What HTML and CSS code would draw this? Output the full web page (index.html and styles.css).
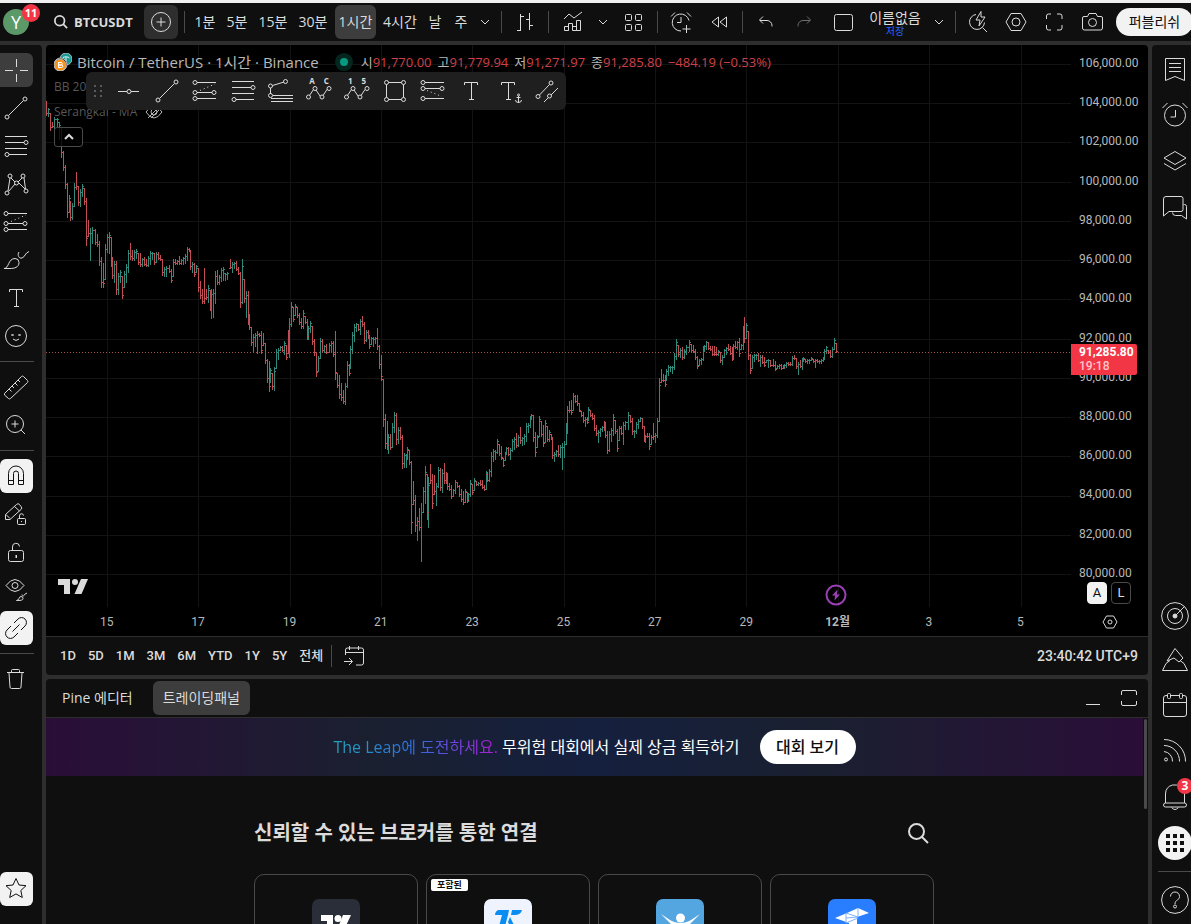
FILE: index.html
```html
<!DOCTYPE html>
<html lang="ko">
<head>
<meta charset="utf-8">
<title>BTCUSDT</title>
<link rel="stylesheet" href="styles.css">
</head>
<body>
<svg class="defs" aria-hidden="true">
  <symbol id="chev" viewBox="0 0 10 10"><path d="M1 3l4 4 4-4"/></symbol>
  <symbol id="line" viewBox="0 0 28 28"><path d="M6.7 21.3L21.3 6.7"/><circle cx="5" cy="23" r="2"/><circle cx="23" cy="5" r="2"/></symbol>
  <symbol id="fib" viewBox="0 0 28 28"><path d="M3 4.500h22M3 10.500h19M3 16.500h22M7 22.500h18"/><circle cx="24" cy="10.500" r="2"/><circle cx="5" cy="22.500" r="2"/></symbol>
  <symbol id="forecast" viewBox="0 0 28 28"><path d="M6 5.500h19M6 15.500h15M6 21.500h19"/><path d="M9 13.500L24 7" stroke-dasharray="1 3"/><circle cx="4" cy="5.500" r="2"/><circle cx="4" cy="15.500" r="2"/><circle cx="23" cy="15.500" r="2"/><circle cx="4" cy="21.500" r="2"/></symbol>
  <symbol id="short" viewBox="0 0 28 28"><path d="M6 5.500h19M6 11.500h15M6 21.500h19"/><path d="M8 13.500L23 19.500" stroke-dasharray="1 3"/><circle cx="4" cy="5.500" r="2"/><circle cx="4" cy="11.500" r="2"/><circle cx="23" cy="11.500" r="2"/><circle cx="4" cy="21.500" r="2"/></symbol>
  <symbol id="text" viewBox="0 0 28 28"><path d="M7.500 8V5.500h13V8M14.500 5.500v17M12 22.500h5"/></symbol>
  <symbol id="full" viewBox="0 0 28 28"><path d="M6.500 11V8a2 2 0 0 1 2-2H11M17 6h3a2 2 0 0 1 2 2v3M22 17v3a2 2 0 0 1-2 2h-3M11 22H8.500a2 2 0 0 1-2-2v-3"/></symbol>
  <symbol id="hex" viewBox="0 0 28 28"><path d="M9 5.500h10L24 14l-5 8.500H9L4 14z"/><circle cx="14" cy="14" r="4"/></symbol>
  <symbol id="tv" viewBox="0 0 30 15"><path d="M0 0h12v15H6V6H0z"/><circle cx="17" cy="3" r="3"/><path d="M23 0h7l-6.500 15h-7z"/></symbol>
</svg>

<header class="topbar">
  <div class="group account">
    <button class="avatar" aria-label="계정">Y<span class="badge">11</span></button>
    <button class="symbol"><svg class="i-search" viewBox="0 0 16 16"><circle cx="6.500" cy="6.500" r="5.500"/><path d="M10.500 10.500L15 15"/></svg>BTCUSDT</button>
    <button class="ib on" aria-label="비교"><svg class="ic" viewBox="0 0 28 28"><circle cx="14" cy="14" r="9.500"/><path d="M14 9.500v9M9.500 14h9"/></svg></button>
  </div>
  <i class="sep"></i>
  <div class="group intervals">
    <button class="iv">1분</button><button class="iv">5분</button><button class="iv wide">15분</button><button class="iv wide">30분</button><button class="iv on">1시간</button><button class="iv hours">4시간</button><button class="iv one">날</button><button class="iv one">주</button>
    <button class="cb" aria-label="더보기"><svg class="chev"><use href="#chev"/></svg></button>
  </div>
  <i class="sep"></i>
  <div class="group style">
    <button class="ib" aria-label="바"><svg class="ic" viewBox="0 0 28 28"><path d="M9.500 6v17M6 22.500h3.500M9.500 8.500H13M18.500 5v17M15 11.500h3.500M18.500 17.500H22"/></svg></button>
  </div>
  <i class="sep"></i>
  <div class="group studies">
    <button class="ib" aria-label="지표"><svg class="ic" viewBox="0 0 28 28"><path d="M5.500 22.500v-4h4v4zM9.500 22.500v-7h4v7M13.500 18.500h4v4M17.500 22.500v-10h4v10zM13.500 22.500h4M5 11l5-5 5 4 8-6"/></svg></button>
    <button class="cb" aria-label="즐겨찾기 지표"><svg class="chev"><use href="#chev"/></svg></button>
    <button class="ib" aria-label="레이아웃 템플릿"><svg class="ic" viewBox="0 0 28 28"><rect x="6.500" y="6.500" width="6" height="6" rx="1"/><rect x="16.500" y="6.500" width="6" height="6" rx="1"/><rect x="6.500" y="16.500" width="6" height="6" rx="1"/><rect x="16.500" y="16.500" width="6" height="6" rx="1"/></svg></button>
  </div>
  <i class="sep"></i>
  <div class="group replay">
    <button class="ib" aria-label="얼러트"><svg class="ic" viewBox="0 0 28 28"><path d="M22 12.500a8.500 8.500 0 1 0-8 10.500M14 9v5.500h-4M4 8.500l4-4M20 4.500l4 4M19.500 17v8M15.500 21h8"/></svg></button>
    <button class="ib" aria-label="리플레이"><svg class="ic" viewBox="0 0 28 28"><path d="M13.500 9v10L7 14zM21.500 9v10L15 14z"/></svg></button>
  </div>
  <i class="sep"></i>
  <div class="group layout">
    <button class="ib" aria-label="되돌리기"><svg class="ic" viewBox="0 0 28 28"><path d="M12 8.500L8.500 12l3.500 3.500M9 12.500h7a5 5 0 0 1 5 5v1"/></svg></button>
    <button class="ib dim" aria-label="다시하기"><svg class="ic" viewBox="0 0 28 28"><path d="M17 8.500l3.500 3.500-3.500 3.500M20 12.500h-7a5 5 0 0 0-5 5v1"/></svg></button>
    <button class="ib" aria-label="레이아웃"><svg class="ic" viewBox="0 0 28 28"><rect x="5.500" y="6.500" width="18" height="16" rx="2"/></svg></button>
    <button class="save"><span>이름없음</span><small>저장</small></button>
    <button class="cb slim" aria-label="레이아웃 관리"><svg class="chev"><use href="#chev"/></svg></button>
  </div>
  <i class="sep"></i>
  <div class="group actions">
    <button class="ib" aria-label="빠른 검색"><svg class="ic" viewBox="0 0 28 28"><path d="M12 6.500a7.500 7.500 0 1 0 8.500 8M18.500 19.500L23 24M17 3.500L12 12h4l-1 6 6-9h-4z"/></svg></button>
    <button class="ib" aria-label="설정"><svg class="ic"><use href="#hex"/></svg></button>
    <button class="ib" aria-label="전체 화면"><svg class="ic"><use href="#full"/></svg></button>
    <button class="ib" aria-label="스냅샷"><svg class="ic" viewBox="0 0 28 28"><path d="M6 8.500h3.500l1.500-3h7l1.500 3H23a1.500 1.500 0 0 1 1.500 1.500v10a2 2 0 0 1-2 2h-16a2 2 0 0 1-2-2V10A1.500 1.500 0 0 1 6 8.500z"/><circle cx="14.500" cy="14.500" r="4"/></svg></button>
    <button class="publish">퍼블리쉬</button>
  </div>
</header>

<div class="workspace">
  <nav class="tools">
    <button class="tool on" aria-label="십자선"><svg class="ic" viewBox="0 0 28 28"><path d="M14.500 3v8M14.500 18v8M3 14.500h8M18 14.500h8"/></svg></button>
    <button class="tool" aria-label="추세줄"><svg class="ic"><use href="#line"/></svg></button>
    <button class="tool" aria-label="피보나치"><svg class="ic"><use href="#fib"/></svg></button>
    <button class="tool" aria-label="패턴"><svg class="ic" viewBox="0 0 28 28"><path d="M8 8l-2 13M9 8l4 4M17 13l6 6M22 8l1.500 11M20 8l-4 4M7 21l6-7"/><circle cx="8" cy="6" r="2"/><circle cx="21" cy="6" r="2"/><circle cx="14.500" cy="13" r="2"/><circle cx="5" cy="23" r="2"/><circle cx="24" cy="21" r="2"/></svg></button>
    <button class="tool" aria-label="예측"><svg class="ic"><use href="#forecast"/></svg></button>
    <button class="tool" aria-label="브러시"><svg class="ic" viewBox="0 0 28 28"><path d="M2 22.500c5 0 4-10 11-10a4 4 0 0 1 4 4c0 5-5 6-9 6zM17 6c-2 3 0 7 3 6 3-1 3-5 7-6.500"/></svg></button>
    <button class="tool" aria-label="텍스트"><svg class="ic"><use href="#text"/></svg></button>
    <button class="tool" aria-label="아이콘"><svg class="ic" viewBox="0 0 28 28"><circle cx="14" cy="14" r="10.500"/><path d="M10 12v2M11 12v2M17 12v2M18 12v2M11 17q3 3 6 0"/></svg></button>
    <hr>
    <button class="tool" aria-label="측정"><svg class="ic" viewBox="0 0 28 28"><path d="M2.500 20.500l17-17a1.500 1.500 0 0 1 2 0l4 4a1.500 1.500 0 0 1 0 2l-17 16a1.500 1.500 0 0 1-2 0l-4-3.500zM7 16l2.500 2.500M10 13l2 2M13 10l2.500 2.500M16 7l2 2"/></svg></button>
    <button class="tool" aria-label="확대"><svg class="ic" viewBox="0 0 28 28"><circle cx="13" cy="13" r="8.500"/><path d="M19 19l4 4M13 9.500v7M9.500 13h7"/></svg></button>
    <hr>
    <button class="tool lit" aria-label="자석"><svg class="ic" viewBox="0 0 28 28"><path d="M6.500 22.500v-11a7.500 7.500 0 0 1 15 0v11h-5v-11a2.500 2.500 0 0 0-5 0v11zM6.500 18.500h5M16.500 18.500h5"/></svg></button>
    <button class="tool" aria-label="그리기 유지"><svg class="ic" viewBox="0 0 28 28"><path d="M3.500 19.500v-5l11-10a2 2 0 0 1 3 0l1.500 2a2 2 0 0 1 0 3L8 19.500zM12.500 6.500l5 4.500M4 14.500l4 4"/><rect x="15.500" y="18.500" width="8" height="6" rx="1"/><path d="M17.500 18v-2a2 2 0 0 1 4-.5M19.500 21v1"/></svg></button>
    <button class="tool" aria-label="잠금"><svg class="ic" viewBox="0 0 28 28"><rect x="6.500" y="12.500" width="15" height="11" rx="2"/><path d="M10.500 12V9a3.500 3.500 0 0 1 7-.5M14 17v3M14.500 17v3"/></svg></button>
    <button class="tool" aria-label="숨기기"><svg class="ic" viewBox="0 0 28 28"><path d="M4 9.500Q8.500 3.500 13 3.500T22 9.500Q17.500 15.500 13 15.500T4 9.500z"/><circle cx="13" cy="9.500" r="3"/><path d="M14.500 24.500c3 0 2-4 4.500-4a2 2 0 0 1 2 2c0 2-3 2-6.500 2zM20 18.500c0 2 2 2 2.500 0l2.500-1.500"/></svg></button>
    <button class="tool lit" aria-label="동기화"><svg class="ic" viewBox="0 0 28 28"><path d="M12 9l4-4a4.900 4.900 0 0 1 7 7l-4 4M16 19l-4 4a4.900 4.900 0 0 1-7-7l4-4M10.500 17.500l7-7"/></svg></button>
    <hr>
    <button class="tool" aria-label="삭제"><svg class="ic" viewBox="0 0 28 28"><path d="M5 7.500h17M9.500 7V5.500a1 1 0 0 1 1-1h6a1 1 0 0 1 1 1V7M7 8l1 14a1.500 1.500 0 0 0 1.500 1.500h8A1.500 1.500 0 0 0 19 22l1-14"/></svg></button>
    <button class="tool lit last" aria-label="즐겨찾기"><svg class="ic" viewBox="0 0 28 28"><path d="M14 3.500l3 6.500 7 .7-5.200 4.800 1.500 7-6.300-3.600L7.700 22.500l1.500-7L4 10.700l7-.7z"/></svg></button>
  </nav>

  <main class="center">
    <section class="chart">
      <div class="plot">
        <svg id="plot" viewBox="0 0 1025 562" preserveAspectRatio="none"></svg>
        <div class="legend">
          <div class="title">
            <svg class="coins" viewBox="0 0 18 18"><circle cx="12" cy="6" r="6" fill="#1a9a94"/><path d="M9 4.500c2-1 5-1 6.500.5M12 4v4" stroke="#e8f5f4"/><circle cx="6.500" cy="11.500" r="6.500" fill="#000"/><circle cx="6" cy="12" r="6" fill="#f7931a"/><path d="M4.500 9v6M4.500 9.500h2.500a1 1 0 0 1 0 2.500H5h2.500a1 1 0 0 1 0 2.500h-3" stroke="#fff"/></svg>
            <h1>Bitcoin / TetherUS · 1시간 · Binance</h1><i class="live"></i>
            <p class="ohlc"><span>시<b>91,770.00</b></span><span>고<b>91,779.94</b></span><span>저<b>91,271.97</b></span><span>종<b>91,285.80</b></span><b>−484.19 (−0.53%)</b></p>
          </div>
          <div class="study">BB 20</div>
          <div class="study">Serangkai - MA <svg class="eye" viewBox="0 0 18 14"><path d="M1 7q4-6 8-6t8 6q-4 6-8 6T1 7zM3 13L15 1M6 13L16 3"/><circle cx="9" cy="7" r="3"/></svg></div>
          <button class="fold" aria-label="접기"><svg class="chev up"><use href="#chev"/></svg></button>
        </div>
        <div class="favs">
          <svg class="grip" viewBox="0 0 10 14"><path d="M1 2h2M7 2h2M1 7h2M7 7h2M1 12h2M7 12h2" stroke-width="2"/></svg>
          <button aria-label="가로줄"><svg class="ic" viewBox="0 0 28 28"><path d="M3 14.500h9M16 14.500h8"/><circle cx="14" cy="14.500" r="2"/></svg></button>
          <button aria-label="추세줄"><svg class="ic"><use href="#line"/></svg></button>
          <button aria-label="롱 포지션"><svg class="ic"><use href="#forecast"/></svg></button>
          <button aria-label="피보나치 되돌림"><svg class="ic"><use href="#fib"/></svg></button>
          <button aria-label="피보나치 확장"><svg class="ic" viewBox="0 0 28 28"><path d="M3.500 11v6M5.500 8.500L17 5M6 18.500h20M4 21.500h22M4 24.500h22"/><circle cx="3.500" cy="9" r="2"/><circle cx="18.500" cy="4.500" r="2"/><circle cx="3.500" cy="18.500" r="2"/></svg></button>
          <button aria-label="엘리엇 조정 파동"><span class="wave"><span>A</span><span>C</span></span><svg class="ic" viewBox="0 0 28 28"><path d="M4.500 18.500l4-6M11 13l4 6M18 18.500l4-6"/><circle cx="3.500" cy="20" r="2"/><circle cx="10" cy="11.500" r="2"/><circle cx="17" cy="20" r="2"/><circle cx="24" cy="11.500" r="2"/></svg></button>
          <button aria-label="엘리엇 충격 파동"><span class="wave"><span>1</span><span>5</span></span><svg class="ic" viewBox="0 0 28 28"><path d="M4.500 18.500l4-6M11 13l4 6M18 18.500l4-6"/><circle cx="3.500" cy="20" r="2"/><circle cx="10" cy="11.500" r="2"/><circle cx="17" cy="20" r="2"/><circle cx="24" cy="11.500" r="2"/></svg></button>
          <button aria-label="사각형"><svg class="ic" viewBox="0 0 28 28"><path d="M7.500 5.500h13M22.500 7.500v13M7.500 22.500h13M5.500 7.500v13"/><circle cx="5.500" cy="5.500" r="2"/><circle cx="22.500" cy="5.500" r="2"/><circle cx="5.500" cy="22.500" r="2"/><circle cx="22.500" cy="22.500" r="2"/></svg></button>
          <button aria-label="숏 포지션"><svg class="ic"><use href="#short"/></svg></button>
          <button aria-label="텍스트"><svg class="ic"><use href="#text"/></svg></button>
          <button aria-label="고정 텍스트"><svg class="ic" viewBox="0 0 28 28"><path d="M6.500 8V5.500h13V8M13.500 5.500v17M11 22.500h5M23.500 19v7M21.500 20.500h4M20.500 23q0 2.500 3 2.500t3-2.500"/><circle cx="23.500" cy="18" r="1"/></svg></button>
          <button aria-label="평행 채널"><svg class="ic" viewBox="0 0 28 28"><path d="M6.500 18L16.500 7.500M11 25l4-4M18 18l7-7"/><circle cx="5" cy="19.500" r="2"/><circle cx="18" cy="6" r="2"/><circle cx="16.500" cy="19" r="2"/></svg></button>
        </div>
        <svg class="tvmark"><use href="#tv"/></svg>
        <button class="bolt" aria-label="이벤트"><svg viewBox="0 0 22 22"><circle cx="11" cy="11" r="9.500"/><path d="M12.500 5.500L7 11.500h3L9.500 16.500 15 10.500h-3z" fill="#9c3fb5"/></svg></button>
      </div>
      <div class="axis">
        <ul class="prices"><li>106,000.00</li><li>104,000.00</li><li>102,000.00</li><li>100,000.00</li><li>98,000.00</li><li>96,000.00</li><li>94,000.00</li><li>92,000.00</li><li>90,000.00</li><li>88,000.00</li><li>86,000.00</li><li>84,000.00</li><li>82,000.00</li><li>80,000.00</li></ul>
        <div class="last-price"><b>91,285.80</b><span>19:18</span></div>
        <div class="modes"><button class="on">A</button><button>L</button></div>
      </div>
      <ol class="times"><li>15</li><li>17</li><li>19</li><li>21</li><li>23</li><li>25</li><li>27</li><li>29</li><li><b>12월</b></li><li>3</li><li>5</li></ol>
      <button class="axis-set" aria-label="축 설정"><svg viewBox="0 0 16 16"><path d="M4.500 2h7L15 8l-3.500 6h-7L1 8z"/><circle cx="8" cy="8" r="2"/></svg></button>
    </section>

    <div class="ranges">
      <button>1D</button><button>5D</button><button>1M</button><button>3M</button><button>6M</button><button>YTD</button><button>1Y</button><button>5Y</button><button>전체</button>
      <i class="sep"></i>
      <button aria-label="날짜로 이동"><svg class="ic" viewBox="0 0 28 28"><path d="M5.500 13V8a2 2 0 0 1 2-2h14a2 2 0 0 1 2 2v13a2 2 0 0 1-2 2H16M5.500 10.500h18M9.500 4v4M18.500 4v4M4 19.500h8M9 16l3.500 3.500L9 23"/></svg></button>
      <button class="clock">23:40:42 UTC+9</button>
    </div>

    <section class="panel">
      <div class="tabs">
        <button>Pine 에디터</button><button class="on">트레이딩패널</button>
        <button class="win" aria-label="최소화"><svg class="ic" viewBox="0 0 28 28"><path d="M7 20.500h14"/></svg></button>
        <button class="win" aria-label="최대화"><svg class="ic" viewBox="0 0 28 28"><path d="M6.500 11V8a1.500 1.500 0 0 1 1.500-1.500h12A1.500 1.500 0 0 1 21.500 8v3M21.500 17v3a1.500 1.500 0 0 1-1.500 1.500H8A1.500 1.500 0 0 1 6.500 20v-3"/></svg></button>
      </div>
      <div class="scroll">
        <div class="banner"><p><em>The Leap에 도전하세요.</em> 무위험 대회에서 실제 상금 획득하기</p><button>대회 보기</button></div>
        <i class="thumb"></i>
        <div class="brokers">
          <div class="head"><h2>신뢰할 수 있는 브로커를 통한 연결</h2><button aria-label="검색"><svg viewBox="0 0 22 22"><circle cx="9.500" cy="9.500" r="7.500"/><path d="M15 15l6 6"/></svg></button></div>
          <div class="cards">
            <a class="card" href="#a"><svg viewBox="0 0 48 48"><rect width="48" height="48" rx="7" fill="#2a2e39"/><path d="M9 16h12v15h-6v-9H9zM31 16h8l-7 15h-7z" fill="#fff"/><circle cx="26" cy="19.500" r="3.500" fill="#fff"/></svg></a>
            <a class="card" href="#b"><span class="tag">포함된</span><svg viewBox="0 0 48 48"><rect width="48" height="48" rx="7" fill="#eff3fd"/><path d="M15 11h10l-1 5-4 15h-6l4-15h-7c0-3 2-5 4-5zM28 11h10c-1 4-4 5-8 5h-3zM26 18l4 8-2 5-4-8z" fill="#0a8cf0"/></svg></a>
            <a class="card" href="#c"><svg viewBox="0 0 48 48"><rect width="48" height="48" rx="7" fill="#54a6e0"/><circle cx="24.500" cy="19" r="4.500" fill="#fff"/><path d="M5 15l9 6c6 4 15 4 21 0l9-6-10 10c-3 3-5 3-6 8h-7c-1-5-4-5-6-8z" fill="#fff"/></svg></a>
            <a class="card" href="#d"><svg viewBox="0 0 48 48"><rect width="48" height="48" rx="7" fill="#297eff"/><path d="M7 19l12-5 11-5 11 5-12 4v14h-8v-8z" fill="#fff"/><path d="M18 14v10l12-5M18 19l12-1M30 9v9l-12-4" stroke="#7fb1ff"/></svg></a>
          </div>
        </div>
      </div>
    </section>
  </main>

  <aside class="rail">
    <button aria-label="관심종목"><svg class="ic" viewBox="0 0 28 28"><path d="M4.500 3.500h19v22L14 21.500l-9.500 4zM8 8.500h12M8 12.500h12M8 16.500h12"/></svg></button>
    <button aria-label="얼러트"><svg class="ic" viewBox="0 0 28 28"><circle cx="14" cy="14.500" r="10.500"/><path d="M14.500 9v7H9.500M1.500 7l5-5M21.500 2l5 5"/></svg></button>
    <button aria-label="오브젝트"><svg class="ic" viewBox="0 0 28 28"><path d="M14 4.500l11 6.500-11 6.500L3 11zM3 16.500l11 6.500 11-6.500"/></svg></button>
    <button aria-label="채팅"><svg class="ic" viewBox="0 0 28 28"><path d="M5 3.500h15a2 2 0 0 1 2 2v11a2 2 0 0 1-2 2H8l-5.500 4.500V6A2.500 2.500 0 0 1 5 3.500zM22.500 11.500h1a2 2 0 0 1 2 2V26l-5-3.500h-6a3 3 0 0 1-3-3"/></svg></button>
    <button class="first-low" aria-label="스크리너"><svg class="ic" viewBox="0 0 28 28"><circle cx="14" cy="14" r="13.400"/><circle cx="14" cy="14" r="7.500"/><circle cx="14" cy="14" r="2" fill="currentColor"/><path d="M14 14l9.500-9.500"/></svg></button>
    <button aria-label="파인"><svg class="ic" viewBox="0 0 28 28"><path d="M14 2.500l8 9.500-4 4-5-4-7 3zM5 17.500L1.500 24.500h25L23 17.500l-4-3M5 17.500l4-3"/></svg></button>
    <button aria-label="캘린더"><svg class="ic" viewBox="0 0 28 28"><path d="M7 4.500H5A2.500 2.500 0 0 0 2.500 7v16A2.500 2.500 0 0 0 5 25.500h18a2.500 2.500 0 0 0 2.500-2.500V7A2.500 2.500 0 0 0 23 4.500h-2M10 4.500h8M2.500 11.500h23"/><rect x="6.500" y="2.500" width="3" height="5" rx="1"/><rect x="18.500" y="2.500" width="3" height="5" rx="1"/></svg></button>
    <button aria-label="뉴스"><svg class="ic" viewBox="0 0 28 28"><circle cx="5" cy="22.500" r="1.500"/><path d="M3 14.500a9.500 9.500 0 0 1 8.500 10M3 8.500a15.500 15.500 0 0 1 15.500 16M3 2.500a21.500 21.500 0 0 1 21.500 22"/></svg></button>
    <button aria-label="알림"><svg class="ic" viewBox="0 0 28 28"><path d="M4.500 20V11a9.500 9.500 0 0 1 7-9h4a9.500 9.500 0 0 1 8 9v9M4.500 20h19a2 2 0 0 1 0 4h-19a2 2 0 0 1 0-4zM10.500 24.500q3.500 4 7 0"/></svg><span class="badge">3</span></button>
    <button aria-label="메뉴"><svg class="apps" viewBox="0 0 34 34"><circle cx="17" cy="17" r="17" fill="#f2f2f2" stroke="none"/><path d="M8 10h4M15 10h4M22 10h4M8 17h4M15 17h4M22 17h4M8 24h4M15 24h4M22 24h4" stroke="#0f0f0f" stroke-width="4"/></svg></button>
    <hr>
    <button aria-label="도움말"><svg class="ic" viewBox="0 0 28 28"><circle cx="14" cy="14" r="13.400"/><path d="M9.500 10.500c0-6 9-6 9 0 0 4-4.500 3-4.500 7.500"/><circle cx="14" cy="20.500" r="1.500"/></svg></button>
  </aside>
</div>
<script src="chart.js"></script>
</body>
</html>
```

FILE: styles.css
```css
* { box-sizing: border-box; }
body {
  margin: 0; height: 100vh; display: flex; flex-direction: column; overflow: hidden;
  background: #2e2e2e; border-top: 3px solid #f0f0f0; color: #dbdbdb;
  font: 14px/18px "Open Sans", "Noto Sans CJK KR", sans-serif;
}
button { margin: 0; padding: 0; border: 0; background: none; color: inherit; font: inherit; display: flex; align-items: center; justify-content: center; flex-shrink: 0; white-space: nowrap; }
svg { fill: none; stroke: currentColor; stroke-width: 1; flex-shrink: 0; display: block; }
h1, h2, p, ul, ol { margin: 0; padding: 0; font-weight: 400; list-style: none; }
hr { width: 100%; height: 1px; border: 0; margin: 4px 0; background: #4a4a4a; flex-shrink: 0; }
.defs { position: absolute; width: 0; height: 0; }
.ic { width: 28px; height: 28px; }
.chev { width: 10px; height: 10px; }
.up { transform: rotate(180deg); }
.sep { width: 1px; height: 22px; background: #4a4a4a; flex-shrink: 0; }
.badge { position: absolute; display: flex; align-items: center; justify-content: center; border-radius: 9px; background: #f23645; color: #fff; }

.topbar { display: flex; align-items: center; height: 38px; background: #0f0f0f; flex-shrink: 0; overflow: hidden; }
.group { display: flex; align-items: center; flex-shrink: 0; }
.account { width: 184px; }
.avatar { position: relative; width: 26px; height: 26px; margin-left: 3px; border-radius: 13px; background: #5b9a68; color: #fff; font-size: 18px; }
.avatar .badge { left: 19px; top: -5px; width: 18px; height: 18px; font: 700 11px/18px "Open Sans", sans-serif; }
.symbol { width: 115px; gap: 6px; justify-content: flex-start; padding-left: 25px; font-size: 13px; font-weight: 700; }
.i-search { width: 14px; height: 14px; stroke-width: 2; }
.ib { width: 34px; height: 34px; border-radius: 6px; }
.ib.on { background: #2e2e2e; }
.dim { color: #6e6e6e; }
.cb { width: 22px; height: 34px; }
.slim { width: 18px; }
.intervals { width: 316px; padding-left: 4px; }
.iv { width: 32px; height: 34px; border-radius: 6px; }
.iv.wide { width: 40px; }
.iv.on { width: 41px; margin: 0 2px; background: #3d3d3d; }
.iv.hours { width: 44px; }
.iv.one { width: 26px; }
.style { width: 46px; justify-content: center; }
.studies { width: 108px; justify-content: center; gap: 2px; }
.replay { width: 84px; justify-content: center; gap: 4px; }
.layout { width: 212px; padding-left: 5px; gap: 5px; }
.save { width: 60px; flex-direction: column; line-height: 17px; }
.save small { font-size: 10px; line-height: 10px; color: #2962ff; }
.actions { flex: 1 0 235px; padding-left: 5px; gap: 4px; }
.publish { width: 77px; height: 28px; margin-left: 3px; border-radius: 14px; background: #f2f2f2; color: #0f0f0f; }

.workspace { flex: 1; min-height: 0; display: flex; gap: 4px; padding-top: 4px; }
.tools { width: 42px; display: flex; flex-direction: column; gap: 4px; padding: 8px 8px 18px 0; background: #0f0f0f; border-top-right-radius: 4px; }
.tool { width: 33px; height: 34px; border-radius: 0 6px 6px 0; padding-right: 2px; }
.tool.on { background: #3d3d3d; }
.tool.lit { background: #f2f2f2; color: #0f0f0f; border-radius: 6px; }
.tool.last { margin-top: auto; }

.center { flex: 1; min-width: 0; display: flex; flex-direction: column; }
.chart { flex: 1; min-height: 0; display: grid; grid-template: minmax(0, 1fr) 29px / minmax(0, 1fr) 77px; background: #000; border-radius: 4px 4px 0 0; }
.plot { position: relative; }
#plot { position: absolute; width: 100%; height: 100%; shape-rendering: crispEdges; }
.legend { position: absolute; left: 8px; top: 4px; display: flex; flex-direction: column; color: #b8b8b8; }
.title { display: flex; align-items: center; height: 25px; }
.coins { width: 18px; height: 18px; margin-right: 5px; }
.title h1 { font-size: 15px; line-height: 24px; white-space: nowrap; }
.live { width: 8px; height: 8px; margin: 0 13px 0 21px; border-radius: 4px; background: #089981; box-shadow: 0 0 0 5px #04261f; }
.ohlc { display: flex; gap: 6px; font-size: 13px; white-space: nowrap; }
.ohlc b { font-weight: 400; color: #d0404b; }
.study { display: flex; align-items: center; gap: 8px; height: 25px; font-size: 12px; color: #575757; }
.eye { width: 18px; height: 14px; color: #b8b8b8; }
.fold { width: 29px; height: 20px; margin-top: 3px; border: 1px solid #4a4a4a; border-radius: 3px; background: #000c; color: #dbdbdb; }
.fold .chev { stroke-width: 2; }
.favs { position: absolute; left: 40px; top: 27px; height: 38px; width: 480px; display: flex; align-items: center; border-radius: 6px; background: #1f1f1f; }
.favs button { position: relative; width: 38px; height: 38px; }
.grip { width: 10px; height: 14px; margin: 0 7px; color: #5a5a5a; }
.wave { position: absolute; left: 0; right: 0; top: 3px; display: flex; justify-content: center; gap: 9px; font: 700 8px/12px "Open Sans", sans-serif; }
.tvmark { position: absolute; left: 12px; bottom: 13px; width: 30px; height: 15px; fill: #dbdbdb; stroke: none; }
.bolt { position: absolute; right: 224px; bottom: 1px; width: 22px; height: 22px; color: #9c3fb5; }
.bolt svg { width: 22px; height: 22px; stroke-width: 2; }
.bolt path { stroke: none; }
.axis { position: relative; display: flex; flex-direction: column; font: 12px/16px Roboto, sans-serif; color: #b8b8b8; }
.prices { flex: 1; display: flex; flex-direction: column; justify-content: space-between; padding: 10px 0 0 8px; }
.last-price { position: absolute; left: 0; top: 299px; width: 66px; padding: 1px 0 2px 8px; display: flex; flex-direction: column; line-height: 14px; background: #f23645; color: #fff; border-radius: 0 2px 2px 0; }
.last-price span { color: #ffc4c9; font-weight: 500; }
.modes { display: flex; gap: 4px; padding: 1px 0 3px 16px; font-size: 13px; }
.modes button { width: 20px; height: 22px; border: 1px solid #4a4a4a; border-radius: 4px; color: #dbdbdb; }
.modes .on { background: #f2f2f2; border-color: #f2f2f2; color: #0f0f0f; }
.times { display: grid; grid-template-columns: repeat(11, 1fr); padding: 7px 5px 0 15px; text-align: center; font: 12px/16px Roboto, "Noto Sans CJK KR", sans-serif; color: #b8b8b8; }
.axis-set svg { width: 16px; height: 16px; color: #dbdbdb; }

.ranges { display: flex; align-items: center; gap: 12px; height: 39px; padding: 0 10px 0 14px; border-top: 1px solid #2e2e2e; background: #0f0f0f; border-radius: 0 0 4px 4px; font: 500 13px/18px Roboto, "Noto Sans CJK KR", sans-serif; }
.ranges .sep { margin: 0 -4px; }
.clock { margin-left: auto; font-size: 14px; }
.panel { flex: 0 0 245px; margin-top: 4px; display: flex; flex-direction: column; background: #0f0f0f; border-radius: 4px 4px 0 0; overflow: hidden; }
.tabs { display: flex; align-items: center; height: 39px; padding: 0 5px 0 6px; border-bottom: 1px solid #2e2e2e; flex-shrink: 0; }
.tabs button { height: 34px; padding: 0 10px; border-radius: 6px; margin-right: 10px; }
.tabs .on { background: #3d3d3d; margin-right: auto; }
.tabs .win { width: 36px; padding: 0; margin: 0; }
.tabs .win:last-child { margin-right: -4px; }
.scroll { position: relative; flex: 1; min-height: 0; overflow: hidden; padding-right: 5px; }
.thumb { position: absolute; right: 1px; top: 1px; width: 3px; height: 90px; border-radius: 2px; background: #4a4a4a; }
.banner { display: flex; align-items: center; justify-content: center; gap: 20px; height: 58px; background: linear-gradient(90deg, #2a0e38, #1a2030 30%, #15203f 50%, #1a2030 70%, #2a0e38); font-size: 16px; font-weight: 500; color: #fff; white-space: nowrap; }
.banner em { font-style: normal; font-weight: 400; background: linear-gradient(90deg, #22a6b8, #2f6be0 50%, #b01cd0); -webkit-background-clip: text; background-clip: text; color: transparent; }
.banner button { width: 96px; height: 34px; border-radius: 17px; background: #fff; color: #0f0f0f; }
.brokers { width: 681px; max-width: 100%; margin: 0 auto; padding-right: 1px; }
.head { display: flex; align-items: center; justify-content: space-between; height: 98px; padding: 16px 5px 0 0; }
.head h2 { font-size: 20px; line-height: 28px; font-weight: 700; }
.head svg { width: 22px; height: 22px; stroke-width: 2; }
.cards { display: grid; grid-template-columns: repeat(4, 1fr); gap: 8px; }
.card { position: relative; height: 160px; padding-top: 24px; border: 1px solid #4a4a4a; border-radius: 10px; }
.card svg { width: 48px; height: 48px; margin: 0 auto; stroke: none; }
.tag { position: absolute; left: 4px; top: 4px; padding: 0 6px; border-radius: 2px; background: #fff; color: #0f0f0f; font: 700 9px/12px "Noto Sans CJK KR", sans-serif; }

.rail { width: 39px; display: flex; flex-direction: column; padding: 1px 0; background: #0f0f0f; border-top-left-radius: 4px; }
.rail button { position: relative; height: 46px; width: 46px; }
.rail .first-low { margin-top: auto; }
.rail .first-low, .rail .first-low + button { height: 44px; }
.rail .badge { right: 5px; top: 4px; width: 16px; height: 16px; font: 700 12px/16px "Open Sans", sans-serif; }
.rail hr { width: 33px; margin: 5px 0 5px 6px; }
.apps { width: 34px; height: 34px; }
```

FILE: chart.js
```js
// Each bar: x, high, low, direction; coordinates are in thirds of a pixel from the segment origin.
const segments = [
  { ox: -46, oy: -45, bars: "139,303,348r 145,325,350g 151,340,392r 157,365,385r 163,350,395g 172,355,380g 178,365,420g" },
  { ox: -46, oy: 85, bars: "184,-10,83r 190,63,122r 196,105,176r 202,159,263r 208,195,250g 212,212,272r 217,218,270g 223,159,230g 229,126,180r 235,168,227r 241,178,230g 247,162,200g 253,174,225r 259,204,347r 265,270,320r 271,295,392g 277,290,342g 286,297,345r 292,313,350r 298,332,408r 304,380,474r 310,400,474r 316,342,450g 322,312,368g 328,306,373g 333,322,412r 338,382,448r 344,392,458g 349,392,494r 355,430,494g 361,420,460g 367,437,507r 373,424,474g 379,402,460g 385,360,428g 391,339,390r 397,360,392r 403,360,392g 409,357,388g 415,370,404r 421,370,410r 427,384,410g 433,382,408r 439,388,412r 445,378,412g 451,363,404g 457,366,390g 463,368,404r 469,366,400g 475,366,390r 481,376,394r 487,388,438r 493,410,440g 499,408,440g 507,405,430r 514,418,458r 520,388,442g 526,388,406r 532,390,404g 538,378,404r 544,386,404g 550,382,404g 556,372,402g 562,350,392g 568,354,366r 572,362,420r 578,396,430g 584,400,442r 590,406,430g 596,415,485r 602,453,507r 608,476,522r 614,414,522r 620,478,510r 626,465,520g 630,480,544r 635,476,567g 640,476,565g 646,424,522g 652,420,464r 658,434,466g 664,415,456g 670,412,452g 676,428,454g 682,426,450g" },
  { ox: 184, oy: 185, bars: "1,87,118r 7,96,128g 13,97,118g 19,94,124r 25,112,136r 31,126,234r 37,87,222g 43,147,218r 49,183,264g 55,183,285r 58,252,300r 64,290,348r 70,312,368g 76,310,350g 82,303,372g 88,309,322r 94,303,372r 100,310,348r 106,338,402r 112,388,460r 118,393,486r 122,415,460g 127,430,480r 133,410,483g 139,357,417g 145,354,390g 151,348,362g 157,348,366r 163,333,374g 169,345,390r 175,300,372r 178,264,384g 184,216,290g 190,230,276r 196,222,258g 202,231,265r 208,250,285r 214,264,296r 220,240,296g 226,258,282r 232,267,330r 235,288,330g 241,272,308g 247,289,345r 253,327,378r 259,366,441r 265,378,426g 271,324,386g 277,327,368r 283,345,368g 289,342,372r 297,338,370g 303,333,368g 310,333,381r 316,303,450r 322,430,474r 328,435,507r 334,459,513r 340,480,522r 346,459,525g 352,394,474g 358,402,438r 361,348,416g 367,306,372g 373,282,336g 379,279,306g 385,282,304r 391,267,316g 397,258,292r 403,276,342r 409,300,336g 415,300,326r 418,315,357r 424,320,345g 430,322,352g 436,322,342g 442,294,360r 448,345,417r 454,374,454r 460,447,591r 466,552,656r 472,573,660r 475,612,672g 481,612,660r 487,579,654g 493,546,609g 499,549,645r 505,591,642g 511,591,630r 517,614,717r 523,670,714g 529,672,714g 533,651,690g 538,660,706r 544,692,912r 550,753,825r 556,796,906r 562,862,934g 568,834,904r 574,820,996g 580,771,849g 586,708,822g 592,732,870r 595,740,894g 601,702,762r 607,732,836r 613,735,795r 619,759,828g 625,711,774g 631,714,782r 637,717,788g 643,699,762r 649,726,762r 652,728,780r 658,759,784r 664,765,808r 670,776,800g 676,750,792g 682,756,774r 688,764,802r" },
  { ox: 414, oy: 255, bars: "4,567,606r 10,573,615r 16,567,608g 22,576,608r 26,580,606g 32,540,591g 37,552,585r 43,534,573g 49,543,558r 55,546,558g 61,541,558r 67,540,567r 73,555,573r 79,513,570g 82,516,546r 88,507,546g 94,456,530g 100,447,486g 106,450,480g 112,417,462g 118,432,468r 124,438,480r 130,474,501r 136,456,484g 139,441,465g 145,442,468r 151,444,480g 157,417,456g 163,411,450g 169,399,444r 175,405,440g 181,381,432r 187,412,438g 193,402,436g 199,370,426g 205,368,398g 211,348,384g 215,342,360g 220,345,426r 226,396,471r 232,405,444g 238,348,410g 244,363,410r 250,375,440r 256,360,430g 262,378,425r 268,390,426g 274,402,420r 278,410,476r 284,456,486g 290,450,472g 296,435,472r 302,435,474g 307,429,510g 313,423,474g 319,370,436g 322,318,402g 328,303,338r 334,300,345r 340,279,334g 346,285,310r 352,285,318r 358,309,336r 364,332,350r 370,336,370r 376,350,380g 382,350,372r 385,321,362g 391,330,350r 397,339,360r 403,345,393r 409,375,408r 415,390,429g 421,384,410g 427,378,396g 433,363,392r 436,366,414r 442,392,462r 448,393,456g 454,384,426g 460,342,408g 466,360,402r 472,387,456r 478,378,424g 484,378,406r 490,366,435g 496,363,390g 505,336,390g 511,345,370r 517,354,406r 523,390,414g 529,366,402g 535,357,386g 541,351,366g 547,354,386r 553,378,426r 556,405,430g 562,399,414r 568,399,450r 574,405,436g 580,369,420r 586,400,430g 592,354,414g 598,234,366g 604,207,250r 610,222,246r 616,225,261r 619,206,242g 625,195,228g 631,198,216g 637,198,222g 643,159,210g 649,117,180g 655,135,172r 661,144,174g 667,141,180r 673,147,178g 679,135,165g 688,120,156g 694,132,156r 700,136,160r 706,147,180r 712,168,207r 718,177,198g 724,174,196g 730,138,184g 733,135,156g 739,123,150g 745,126,150r 751,138,153r 757,138,168r 763,138,168r 769,141,168r 775,150,168g 781,156,190r 787,165,195g 793,148,174g 799,141,165g 805,132,152r 811,138,165r 817,140,183r 820,132,180g 826,123,147r 832,123,150g 838,114,171r 844,132,150g 850,78,150g 853,51,130r 859,69,118g 865,93,180r 871,162,222r 877,165,207g 883,162,186g 889,162,180g 895,159,186r 901,165,202g 907,164,192r 913,170,200r 919,180,190g 925,178,204g 931,180,200r 940,178,200r 946,184,213r 952,195,206g 958,192,206g 964,192,210r 970,195,208r 973,192,208g 979,186,204g 985,186,198r 991,185,198r 997,168,198g 1003,165,180r 1009,174,206r 1015,186,225g 1021,180,204r 1027,174,210g 1030,170,186g 1036,178,190r 1042,177,192g 1048,177,192g 1054,171,184g 1060,177,189r 1066,177,204g 1072,177,188r 1078,180,192g 1084,178,192g 1090,170,186g 1093,147,180g 1099,138,162g 1105,150,162r 1111,150,174r 1117,141,174g 1123,114,150g 1130,129,159r" }
];

let grid = "";
for (let i = 0; i < 14; i++) grid += `M0 ${Math.round(19 + i * 39.23) + 0.5}H1025`;
for (let i = 0; i < 11; i++) grid += `M${Math.round(61 + i * 91.35) + 0.5} 0V562`;

const paths = { r: "", g: "" };
let close = null;
for (const s of segments) {
  for (const bar of s.bars.split(" ")) {
    const dir = bar.slice(-1);
    const [bx, bh, bl] = bar.slice(0, -1).split(",").map(Number);
    const x = Math.floor(bx / 3) + s.ox + 0.5;
    const hi = Math.round(bh / 3) + s.oy;
    const lo = Math.round(bl / 3) + s.oy;
    const open = Math.min(lo - 1, Math.max(hi, close === null ? hi : close));
    close = Math.round(dir === "r" ? lo - (lo - hi) * 0.15 - 1 : hi + (lo - hi) * 0.15);
    paths[dir] += `M${x} ${hi}V${lo}M${x - 1.5} ${open + 0.5}h1.5M${x} ${close + 0.5}h1.5`;
  }
}

document.getElementById("plot").innerHTML =
  `<path d="${grid}" stroke="#131313"/>` +
  `<path d="${paths.g}" stroke="#2f8a7b"/>` +
  `<path d="${paths.r}" stroke="#c24d55"/>` +
  `<path d="M0 307.5H1025" stroke="#a8524f" stroke-dasharray="1 2"/>`;
```
